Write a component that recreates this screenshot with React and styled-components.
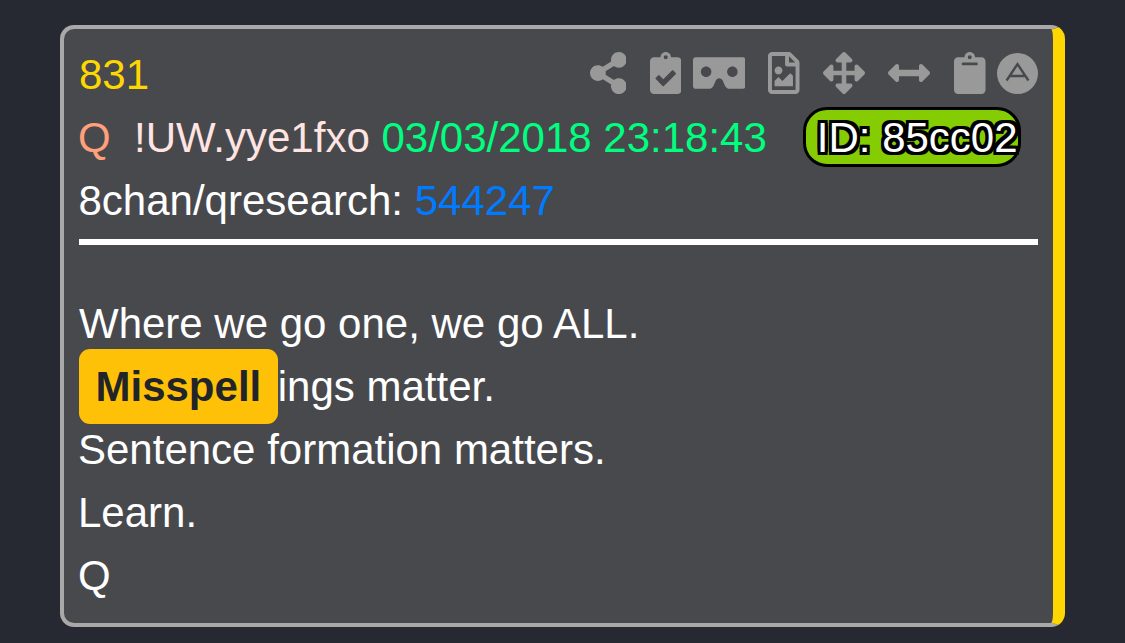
import styled, { createGlobalStyle } from "styled-components";
import {
    FaArrowsAlt,
    FaArrowsAltH,
    FaClipboard,
    FaClipboardCheck,
    FaRegFileImage,
    FaShareAlt,
    FaVrCardboard,
} from "react-icons/fa";

const actions = [
    { name: "share", Icon: FaShareAlt, width: 36.75, gap: 0 },
    { name: "check", Icon: FaClipboardCheck, width: 31.5, gap: 23.25 },
    { name: "cardboard", Icon: FaVrCardboard, width: 52.5, gap: 11.5 },
    { name: "image", Icon: FaRegFileImage, width: 31.5, gap: 23 },
    { name: "move", Icon: FaArrowsAlt, width: 42, gap: 23.5 },
    { name: "stretch", Icon: FaArrowsAltH, width: 42, gap: 23 },
    { name: "clipboard", Icon: FaClipboard, width: 31.5, gap: 24 },
];

const ArchiveIcon = () => (
    <Archive viewBox="0 0 41 41">
        <circle cx="20.5" cy="20.5" r="20.5" fill="#999" />
        <path
            d="M9.6 27.5 L20.5 11.2 L31.4 27.5 M13.5 23 H27.5"
            fill="none"
            stroke="#48494d"
            strokeWidth="2.4"
        />
    </Archive>
);

const App = () => {
    return (
        <>
            <GlobalStyle />
            <Card>
                <TopRow>
                    <Text $color="#ffd700">831</Text>
                    <Actions>
                        {actions.map(({ name, Icon, width, gap }) => (
                            <Action key={name} $width={width} $gap={gap}>
                                <Icon />
                            </Action>
                        ))}
                        <ArchiveIcon />
                    </Actions>
                </TopRow>
                <Row $indent={-1}>
                    <Text $color="#ffa07a">Q</Text>
                    {"  "}
                    <Text $color="#ffe4e1">!UW.yye1fxo</Text>{" "}
                    <Text $color="#00ff7f">03/03/2018 23:18:43</Text>
                    <PosterId>ID: 85cc02</PosterId>
                </Row>
                <Row $indent={-0.5}>
                    8chan/qresearch: <Text $color="#007bff">544247</Text>
                </Row>
                <Divider />
                <Row>Where we go one, we go ALL.</Row>
                <Row>
                    <Mark>Misspell</Mark>ings matter.
                </Row>
                <Row $indent={-1}>Sentence formation matters.</Row>
                <Row $indent={-1}>Learn.</Row>
                <Row $indent={-1}>Q</Row>
            </Card>
        </>
    );
};

const GlobalStyle = createGlobalStyle`
    * {
        box-sizing: border-box;
    }
    body {
        margin: 0;
        background: #262932;
        overflow: hidden;
    }
`;

const Card = styled.article`
    width: 1005px;
    height: 602px;
    margin: 25px 0 0 60px;
    padding: 15px;
    border: 4px solid #a9a9a9;
    border-right: 12px solid #ffd700;
    border-radius: 14px;
    background: #48494d;
    color: #fff;
    font-family: "Liberation Sans", Arial, sans-serif;
    font-size: 42px;
    line-height: 61px;
`;

const Row = styled.div`
    height: 63px;
    white-space: pre;
    text-indent: ${(props) => props.$indent || 0}px;
`;

const TopRow = styled(Row)`
    display: flex;
    justify-content: space-between;
`;

const Text = styled.span`
    color: ${(props) => props.$color};
`;

const Actions = styled.div`
    display: flex;
    align-items: center;
    height: 58px;
`;

const Action = styled.span`
    display: flex;
    width: ${(props) => props.$width}px;
    height: 42px;
    margin-left: ${(props) => props.$gap}px;
    color: #999;

    svg {
        width: 100%;
        height: 100%;
    }
`;

const Archive = styled.svg`
    width: 41px;
    height: 41px;
    margin-left: 11.5px;
`;

const PosterId = styled.span`
    display: inline-block;
    width: 218px;
    height: 60px;
    margin-left: 36px;
    padding-left: 11px;
    border: 3px solid #000;
    border-radius: 24px;
    background: #85cc02;
    line-height: 55px;
    text-indent: 0;
    vertical-align: top;
    text-shadow: -3px 0 #000, 3px 0 #000, 0 -3px #000, 0 3px #000,
        -3px -3px #000, 3px -3px #000, -3px 3px #000, 3px 3px #000;
`;

const Divider = styled.hr`
    height: 6px;
    margin: 6px 0 48px;
    border: 0;
    background: #fff;
`;

const Mark = styled.mark`
    padding: 14px 16.5px;
    border-radius: 11px;
    background: #ffc107;
    color: #212529;
    font-weight: bold;
`;

export default App;
